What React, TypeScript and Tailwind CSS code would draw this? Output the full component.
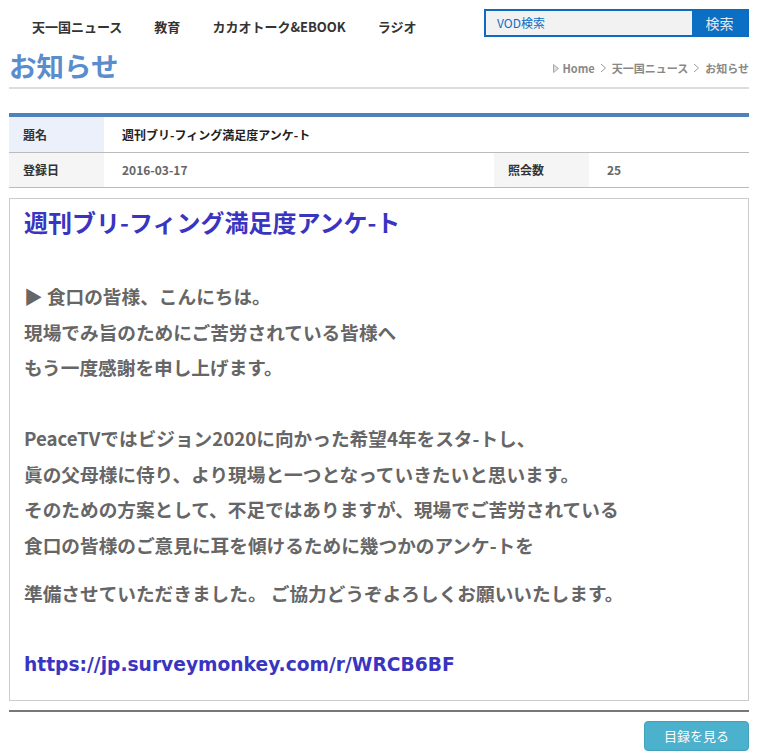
import React from "react";

const navItems = ["天一国ニュース", "教育", "カカオトーク&EBOOK", "ラジオ"];

const bodyLines = [
  "▶ 食口の皆様、こんにちは。",
  "現場でみ旨のためにご苦労されている皆様へ",
  "もう一度感謝を申し上げます。",
  "",
  "PeaceTVではビジョン2020に向かった希望4年をスタ-トし、",
  "眞の父母様に侍り、より現場と一つとなっていきたいと思います。",
  "そのための方案として、不足ではありますが、現場でご苦労されている",
  "食口の皆様のご意見に耳を傾けるために幾つかのアンケ-トを",
];

const Chevron = () => (
  <svg width="7" height="10" viewBox="0 0 7 10" className="mx-[5px]">
    <path d="M1 1l4.5 4L1 9" fill="none" stroke="#999" strokeWidth="1" />
  </svg>
);

const App = () => {
  return (
    <div className="w-[740px] ml-[9px] bg-white font-['Noto_Sans_CJK_JP',sans-serif]">
      {/* top bar */}
      <div className="flex h-[45px]">
        <nav className="flex gap-[32px] ml-[23px] mt-[18px] h-[18px] items-center text-[13px] font-bold text-[#333]">
          {navItems.map((n) => (
            <span key={n}>{n}</span>
          ))}
        </nav>
        <div className="ml-auto mt-[9px] flex w-[265px] h-[28px] border-2 border-[#0b6cc0]">
          <input
            className="flex-1 min-w-0 bg-[#f2f2f2] pl-[11px] text-[12px] text-[#0d6cc0] placeholder:text-[#0d6cc0] outline-none"
            placeholder="VOD検索"
          />
          <button type="button" className="w-[55px] bg-[#0b6fc3] text-[14px] text-[#e4e8ee]">
            検索
          </button>
        </div>
      </div>

      {/* title */}
      <div className="flex items-center justify-between h-[44px] border-b-2 border-[#dddddd]">
        <h1 className="text-[27.5px] font-bold text-[#5b8ccc] leading-none -mt-[1px]">お知らせ</h1>
        <div className="flex items-center text-[11px] font-bold text-[#888] mt-[4px]">
          <svg width="6" height="9" viewBox="0 0 6 9" className="mr-[4px]">
            <path d="M0.5 0.5L5.5 4.5L0.5 8.5Z" fill="#ddd" stroke="#aaa" strokeWidth="1" />
          </svg>
          <span>Home</span>
          <Chevron />
          <span>天一国ニュース</span>
          <Chevron />
          <span>お知らせ</span>
        </div>
      </div>

      {/* info table */}
      <div className="mt-[24px] border-t-4 border-[#4f81bd] text-[12px] font-bold">
        <div className="flex h-[36px] border-b border-[#bbb]">
          <div className="w-[95px] bg-[#ebf0fa] pl-[14px] flex items-center text-[#333]">題名</div>
          <div className="pl-[18px] flex items-center text-[#222]">週刊ブリ-フィング満足度アンケ-ト</div>
        </div>
        <div className="flex h-[35px] border-b border-[#bbb]">
          <div className="w-[95px] bg-[#f5f5f5] pl-[14px] flex items-center text-[#333]">登録日</div>
          <div className="w-[390px] pl-[18px] flex items-center text-[#666]">2016-03-17</div>
          <div className="w-[95px] bg-[#f5f5f5] pl-[14px] flex items-center text-[#333]">照会数</div>
          <div className="pl-[18px] flex items-center text-[#666]">25</div>
        </div>
      </div>

      {/* content */}
      <div className="mt-[10px] border border-[#ccc] pl-[14px] pt-[7px] pb-[17px]">
        <h2 className="text-[24px] font-bold text-[#3a35c1] leading-[32px]">
          週刊ブリ-フィング満足度アンケ-ト
        </h2>
        <div className="mt-[40px] text-[18.67px] font-bold text-[#666] leading-[35.5px]">
          {bodyLines.map((l, i) => (
            <p key={i} className="h-[35.5px]">
              {l}
            </p>
          ))}
          <p className="mt-[13px]">準備させていただきました。 ご協力どうぞよろしくお願いいたします。</p>
          <p className="h-[35.5px]"></p>
          <a
            href="#"
            className="block font-['DejaVu_Sans',sans-serif] text-[18.67px] text-[#3a35c1] h-[36.5px] pt-[1px]"
          >
            https://jp.surveymonkey.com/r/WRCB6BF
          </a>
        </div>
      </div>

      {/* footer */}
      <div className="mt-[9px] border-t-2 border-[#777] flex justify-end pt-[9px]">
        <button
          type="button"
          className="w-[105px] h-[30px] rounded-[4px] bg-[#4cb1cd] border border-[#3fa2bd] text-[13px] text-white"
        >
          目録を見る
        </button>
      </div>
    </div>
  );
};

export default App;
